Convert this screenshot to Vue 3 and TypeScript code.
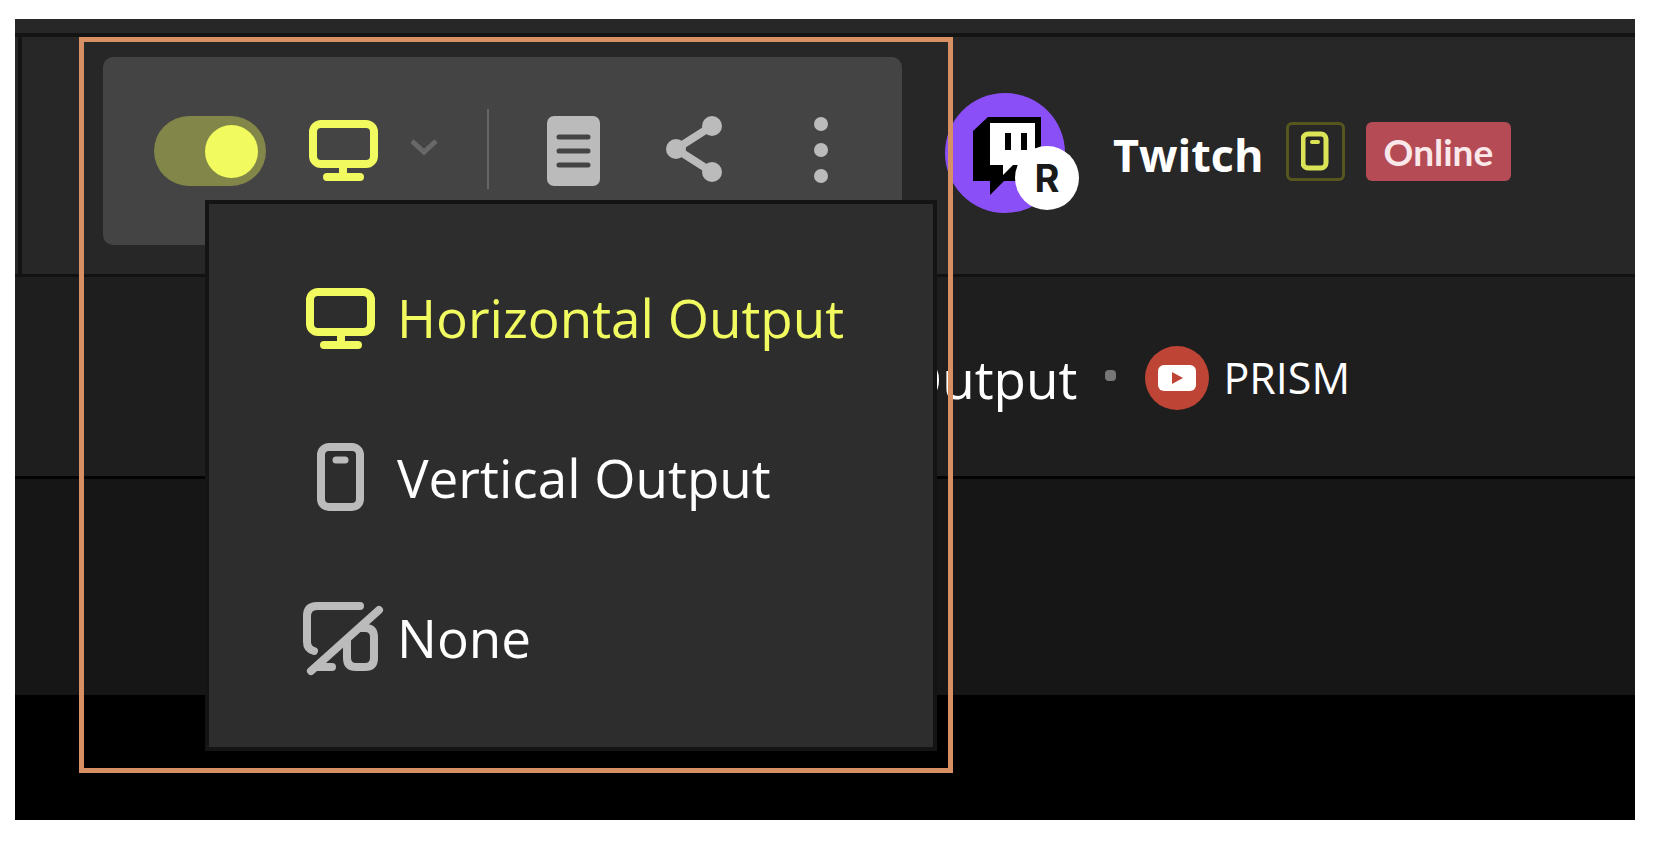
<script setup lang="ts">
import { ref } from 'vue'

type OutputId = 'horizontal' | 'vertical' | 'none'

interface OutputOption {
  id: OutputId
  label: string
}

const options: OutputOption[] = [
  { id: 'horizontal', label: 'Horizontal Output' },
  { id: 'vertical', label: 'Vertical Output' },
  { id: 'none', label: 'None' },
]

const selected = ref<OutputId>('horizontal')
const enabled = ref(true)
const menuOpen = ref(true)
</script>

<template>
  <main class="stage">
    <div class="strip"></div>

    <section class="channel-row">
      <div class="toolbar">
        <input v-model="enabled" class="switch" type="checkbox" role="switch" aria-label="Enable output" />
        <button class="output-button" type="button" aria-label="Choose output" :aria-expanded="menuOpen" @click="menuOpen = !menuOpen">
          <svg class="monitor" viewBox="4 8 72 64" fill="none" stroke="currentColor" stroke-width="8" stroke-linecap="round">
            <rect x="9" y="14" width="61" height="40" rx="8" />
            <path d="M39 54V66M23 67H56" />
          </svg>
          <svg class="chevron" viewBox="0 0 28 20" fill="none" stroke="currentColor" stroke-width="5">
            <path d="M1 3L13 14L25 3" />
          </svg>
        </button>
        <span class="divider"></span>
        <button class="tool" type="button" aria-label="Details">
          <svg class="doc" viewBox="0 0 54 70">
            <rect x="0" y="0" width="53" height="70" rx="7" fill="currentColor" />
            <path d="M12 21H41M12 35H41M12 49H41" stroke="#444444" stroke-width="5" stroke-linecap="round" />
          </svg>
        </button>
        <button class="tool share-tool" type="button" aria-label="Share">
          <svg class="share" viewBox="0 0 56 70" fill="currentColor">
            <path d="M46 10L10 33L46 56" fill="none" stroke="currentColor" stroke-width="8" />
            <circle cx="46" cy="10" r="10" />
            <circle cx="10" cy="33" r="10" />
            <circle cx="46" cy="56" r="10" />
          </svg>
        </button>
        <button class="tool more-tool" type="button" aria-label="More">
          <svg class="more" viewBox="0 0 14 70" fill="currentColor">
            <circle cx="7" cy="8" r="7" />
            <circle cx="7" cy="34" r="7" />
            <circle cx="7" cy="60" r="7" />
          </svg>
        </button>

        <div v-if="menuOpen" class="menu" role="menu">
          <button
            v-for="option in options"
            :key="option.id"
            class="menu-item"
            :class="{ active: option.id === selected }"
            type="button"
            role="menuitemradio"
            :aria-checked="option.id === selected"
            @click="selected = option.id"
          >
            <svg class="menu-icon" viewBox="0 0 80 80" fill="none" stroke="currentColor" stroke-width="8" stroke-linecap="round">
              <template v-if="option.id === 'horizontal'">
                <rect x="9" y="14" width="61" height="40" rx="8" />
                <path d="M40 54V66M23 67H57" />
              </template>
              <template v-else-if="option.id === 'vertical'">
                <rect x="20" y="9" width="39" height="60" rx="8" />
                <path d="M35 22H44" stroke-width="7" />
              </template>
              <template v-else>
                <path d="M59 8H16Q6 8 6 18V44Q6 51 13 53M10 73L78 12M16 69H31M60 30H64Q73 30 73 39V60Q73 69 64 69H55Q46 69 46 60V43" />
              </template>
            </svg>
            <span>{{ option.label }}</span>
          </button>
        </div>
      </div>

      <div class="channel">
        <div class="avatar">
          <svg class="twitch-logo" viewBox="0 0 122 122">
            <circle cx="60" cy="61" r="60" fill="#8b4ff8" />
            <path d="M43 25H96V63L70 89H59L45 103V89H28V39Z" fill="#000000" />
            <path d="M45 31H90V58L75 73H68L58 83V73H45Z" fill="#ffffff" />
            <path d="M60 41H66V58H60ZM76 41H82V58H76Z" fill="#000000" />
          </svg>
          <span class="avatar-badge">R</span>
        </div>
        <strong class="channel-name">Twitch</strong>
        <div class="badges">
          <span class="orientation">
            <svg class="phone" viewBox="0 0 28 40" fill="none" stroke="currentColor">
              <rect x="2" y="3" width="23" height="34" rx="5" stroke-width="5" />
              <path d="M11 11H17" stroke-width="4" stroke-linecap="round" />
            </svg>
          </span>
          <span class="status">Online</span>
        </div>
      </div>
    </section>

    <section class="detail-row">
      <span class="detail-label">Output</span>
      <span class="dot"></span>
      <svg class="youtube" viewBox="0 0 64 64">
        <circle cx="32" cy="32" r="32" fill="#be4535" />
        <rect x="13" y="19" width="38" height="26" rx="6" fill="#ffffff" />
        <path d="M27 26L38 32L27 38Z" fill="#be4535" />
      </svg>
      <span class="account">PRISM</span>
    </section>

    <section class="empty-row"></section>
    <section class="preview"></section>
    <div class="highlight"></div>
  </main>
</template>

<style>
body {
  margin: 0;
  background: #ffffff;
}
</style>

<style scoped>
.stage {
  position: relative;
  margin: 19px 31px 31px 15px;
  overflow: hidden;
  background: #000000;
  color: #ffffff;
  font-family: "Open Sans", "Noto Sans", sans-serif;
  line-height: 1;
  white-space: nowrap;
}

button {
  margin: 0;
  padding: 0;
  border: 0;
  background: none;
  color: inherit;
  font: inherit;
  cursor: pointer;
}

svg {
  display: block;
  flex: none;
}

.strip {
  height: 14px;
  background: #272727;
  border-bottom: 4px solid #141414;
}

.channel-row {
  display: flex;
  align-items: flex-start;
  gap: 43px;
  padding: 20px 0 27px 88px;
  border-bottom: 3px solid #121212;
  background: linear-gradient(to right, #272727 3px, #141414 3px 7px, #272727 7px);
}

.toolbar {
  position: relative;
  display: flex;
  align-items: center;
  box-sizing: border-box;
  flex: none;
  height: 188px;
  padding: 0 74px 0 51px;
  border-radius: 10px;
  background: #444444;
  color: #bbbbbb;
}

.switch {
  appearance: none;
  display: flex;
  align-items: center;
  justify-content: flex-start;
  box-sizing: border-box;
  width: 112px;
  height: 70px;
  margin: 0;
  padding: 0 8px;
  border-radius: 35px;
  background: #666666;
}

.switch::before {
  content: "";
  width: 53px;
  height: 53px;
  border-radius: 50%;
  background: #bbbbbb;
}

.switch:checked {
  justify-content: flex-end;
  background: #828648;
}

.switch:checked::before {
  background: #f1fb5f;
}

.output-button {
  display: flex;
  align-items: center;
  gap: 31px;
  margin-left: 42px;
  padding-bottom: 2px;
}

.monitor {
  width: 72px;
  height: 64px;
  color: #f1fb5f;
}

.chevron {
  width: 28px;
  height: 20px;
  padding-bottom: 4px;
  color: #686868;
}

.divider {
  width: 2px;
  height: 80px;
  margin: 0 58px 4px 48px;
  background: #666666;
}

.share-tool {
  margin-left: 65px;
}

.more-tool {
  margin-left: 92px;
}

.doc {
  width: 54px;
  height: 70px;
}

.share {
  width: 56px;
  height: 70px;
}

.more {
  width: 14px;
  height: 70px;
}

.menu {
  position: absolute;
  top: 143px;
  left: 102px;
  z-index: 2;
  display: flex;
  flex-direction: column;
  box-sizing: border-box;
  width: 732px;
  padding: 34px 0 29px;
  border: 4px solid #141414;
  background: #2d2d2d;
}

.menu-item {
  display: flex;
  align-items: center;
  gap: 16px;
  height: 160px;
  padding-left: 92px;
  color: #bbbbbb;
  font-size: 53px;
  text-align: left;
}

.menu-item span {
  padding-bottom: 2px;
  color: #ffffff;
}

.menu-item.active,
.menu-item.active span {
  color: #f1fb5f;
}

.menu-icon {
  width: 80px;
  height: 80px;
  overflow: visible;
}

.channel {
  display: flex;
  align-items: center;
  height: 190px;
}

.avatar {
  position: relative;
  width: 134px;
  height: 120px;
}

.twitch-logo {
  width: 122px;
  height: 122px;
}

.avatar-badge {
  position: absolute;
  top: 54px;
  left: 70px;
  display: flex;
  align-items: center;
  justify-content: center;
  width: 64px;
  height: 64px;
  border-radius: 50%;
  background: #ffffff;
  color: #1a1a1a;
  font: 700 38px/1 Inter, sans-serif;
}

.channel-name {
  margin-left: 34px;
  padding-top: 6px;
  font-size: 45px;
  line-height: 60px;
}

.badges {
  display: flex;
  align-items: center;
  gap: 21px;
  margin-left: 22px;
  padding-bottom: 2px;
}

.orientation {
  display: flex;
  align-items: center;
  justify-content: center;
  box-sizing: border-box;
  width: 59px;
  height: 59px;
  border: 3px solid #55571f;
  border-radius: 6px;
  color: #dbe456;
}

.phone {
  width: 28px;
  height: 40px;
}

.status {
  padding: 0 18px;
  border-radius: 6px;
  background: #b44b55;
  color: #fae8ea;
  font: 700 37px/59px Lato, sans-serif;
}

.detail-row {
  display: flex;
  align-items: center;
  box-sizing: border-box;
  height: 202px;
  padding: 2px 0 0 886px;
  border-bottom: 3px solid #040404;
  background: #1e1e1e;
}

.detail-label {
  padding-top: 2px;
  font-size: 53px;
}

.dot {
  width: 11px;
  height: 11px;
  margin: 0 29px 4px 28px;
  border-radius: 4px;
  background: #777777;
}

.youtube {
  width: 64px;
  height: 64px;
}

.account {
  margin-left: 14px;
  font-size: 43px;
}

.empty-row {
  height: 216px;
  background: #161616;
}

.preview {
  height: 125px;
  background: #000000;
}

.highlight {
  position: absolute;
  top: 18px;
  left: 64px;
  z-index: 3;
  box-sizing: border-box;
  width: 874px;
  height: 736px;
  border: 5px solid #d69064;
  pointer-events: none;
}
</style>
